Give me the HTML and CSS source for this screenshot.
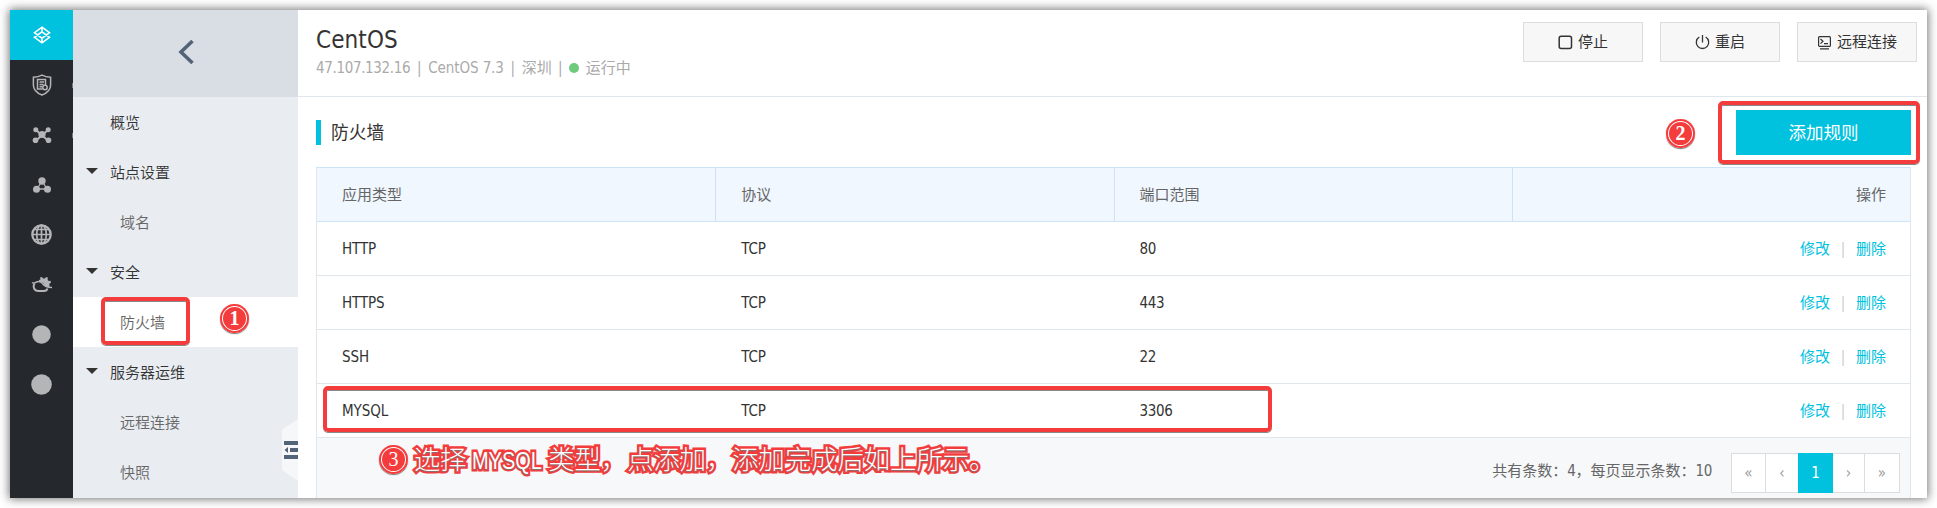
FILE: index.html
```html
<!DOCTYPE html>
<html lang="zh-CN">
<head>
<meta charset="utf-8">
<title>CentOS - 防火墙</title>
<link rel="stylesheet" href="styles.css">
</head>
<body>
<div class="window">
  <nav class="rail">
    <a class="rail-item active"><svg width="18" height="18" viewBox="0 0 18 18" fill="none" stroke="#fff" stroke-width="1.6"><path d="M9 1.2 16.500 6.700 9 12.200 1.500 6.700zM9 5.800 16.500 11.300 9 16.800 1.500 11.300zM9 1.200v4.600M9 12.200v4.600"/></svg></a>
    <a class="rail-item"><svg width="20" height="22" viewBox="0 0 20 22" fill="none" stroke="#b3b5b7" stroke-width="1.500"><path d="M10 1.200c3 1.600 5.500 2 8.600 2v8c0 4.500-3.600 7.800-8.600 9.800C5 19 1.400 15.700 1.400 11.200v-8c3.100 0 5.600-.4 8.600-2z"/><path d="M13.500 11V5.500h-8v9.500h5M7.500 8h4.500M7.500 10.500h4M7.500 12.800h2.500"/><circle cx="13" cy="13.500" r="2.200"/></svg><i class="tick"></i></a>
    <a class="rail-item"><svg width="20" height="18" viewBox="0 0 20 18" fill="#b3b5b7" stroke="#b3b5b7"><path d="M4 4l12 10.500M16 4 4 14.500" stroke-width="2"/><g stroke="none"><circle cx="10" cy="8.500" r="3.600"/><circle cx="3.800" cy="3.800" r="2.500"/><circle cx="16.200" cy="3.800" r="2.500"/><circle cx="3.500" cy="14.300" r="2.800"/><circle cx="16.500" cy="14.300" r="2.800"/></g></svg><i class="tick"></i></a>
    <a class="rail-item"><svg width="18" height="18" viewBox="0 0 18 18" fill="#b3b5b7" stroke="#b3b5b7"><path d="M9 5 4 13h10z" fill="none" stroke-width="1.300"/><g stroke="none"><circle cx="9" cy="5" r="3.700"/><circle cx="3.500" cy="13.300" r="3.500"/><circle cx="14.500" cy="13.300" r="3.500"/></g></svg></a>
    <a class="rail-item"><svg width="21" height="21" viewBox="0 0 21 21" fill="none" stroke="#b3b5b7" stroke-width="1.700"><circle cx="10.500" cy="10.500" r="9.200" stroke-width="2.300"/><ellipse cx="10.500" cy="10.500" rx="4.800" ry="9.300"/><path d="M10.500 1v19M1 10.500h19M3 5.500h15M3 15.500h15"/></svg></a>
    <a class="rail-item"><svg width="22" height="18" viewBox="0 0 22 18"><path d="M8 4 9.500 3.500 9 1.500l2-.5 1 1.500h2L15 1l2 .8-.5 2 1.300 1.300 1.700-.3.500 2-1.700 1 .3 3-3.500.5L12 6.500 8 6z" fill="#b3b5b7"/><path d="M1 6.500c2 1.500 3 0 4.500-.5s4.500-.5 6 1.500 4 4 9.500 4" fill="none" stroke="#b3b5b7" stroke-width="1.500"/><path d="M3.500 7.500c-2 3-.5 7.500 4 7.500h5.500c1.500 0 3-1 3.500-2.500" fill="none" stroke="#b3b5b7" stroke-width="2"/></svg></a>
    <a class="rail-item"><svg width="19" height="19" viewBox="0 0 19 19"><circle cx="9.500" cy="9.500" r="9.300" fill="#b3b5b7"/></svg></a>
    <a class="rail-item"><svg width="21" height="21" viewBox="0 0 21 21"><circle cx="10.500" cy="10.500" r="10.300" fill="#b3b5b7"/></svg></a>
  </nav>

  <aside class="sidebar">
    <div class="back"><svg width="18" height="26" viewBox="0 0 18 26" fill="none" stroke="#546478" stroke-width="3.600"><path d="M15.500 2 4 13l11.500 11"/></svg></div>
    <a class="menu">概览</a>
    <a class="menu group">站点设置</a>
    <a class="menu sub">域名</a>
    <a class="menu group">安全</a>
    <a class="menu sub current">防火墙<span class="mark mark-menu"></span><span class="badge badge-one">1</span></a>
    <a class="menu group">服务器运维</a>
    <a class="menu sub">远程连接</a>
    <a class="menu sub">快照</a>
    <svg class="fold" width="16" height="62" viewBox="0 0 16 62"><path d="M16 0 0 11v40l16 11z" fill="#f6f7f8"/><path d="M2 22h14v4H2zM8 29h8v4H8zM2 36h14v4H2zM6 28v6l-3.500-3z" fill="#546478"/></svg>
  </aside>

  <main class="main">
    <header class="head">
      <div>
        <h1 class="title">CentOS</h1>
        <p class="meta"><span class="lat">47.107.132.16</span><i class="bar">|</i><span class="lat os">CentOS 7.3</span><i class="bar">|</i><span>深圳</span><i class="bar last">|</i><i class="dot"></i><span>运行中</span></p>
      </div>
      <div class="actions">
        <button class="btn"><svg width="15" height="15" viewBox="0 0 15 15" fill="none" stroke="#333" stroke-width="1.500"><rect x="1.200" y="1.200" width="12.300" height="12.300" rx="2"/></svg>停止</button>
        <button class="btn"><svg width="15" height="15" viewBox="0 0 15 15" fill="none" stroke="#333" stroke-width="1.300"><path d="M7.500 0v7.500M4.300 2A6.200 6.200 0 1 0 10.700 2"/></svg>重启</button>
        <button class="btn"><svg width="15" height="15" viewBox="0 0 15 15" fill="none" stroke="#333" stroke-width="1.200"><rect x="1.600" y="1.600" width="11.800" height="9.800" rx="1"/><path d="M3.500 4l2.500 2.300L3.500 8.600M7 8.600h4M3 13.900h9"/></svg>远程连接</button>
      </div>
    </header>

    <section class="content">
      <div class="section-head">
        <h2 class="section-title">防火墙</h2>
        <div class="add-wrap"><span class="badge badge-two">2</span><button class="add">添加规则</button><span class="mark mark-add"></span></div>
      </div>
      <div class="table">
        <div class="row th"><div>应用类型</div><div>协议</div><div>端口范围</div><div class="ops">操作</div></div>
        <div class="row"><div>HTTP</div><div>TCP</div><div>80</div><div class="ops"><a>修改</a><i>|</i><a>删除</a></div></div>
        <div class="row"><div>HTTPS</div><div>TCP</div><div>443</div><div class="ops"><a>修改</a><i>|</i><a>删除</a></div></div>
        <div class="row"><div>SSH</div><div>TCP</div><div>22</div><div class="ops"><a>修改</a><i>|</i><a>删除</a></div></div>
        <div class="row"><div>MYSQL</div><div>TCP</div><div>3306</div><div class="ops"><a>修改</a><i>|</i><a>删除</a></div><span class="mark mark-row"></span></div>
        <div class="foot">
          <div class="note"><span class="badge badge-three">3</span><span class="note-text">选择 <b>MYSQL</b> 类型，点添加，添加完成后如上所示。</span></div>
          <span class="count">共有条数：<span class="lat">4</span>，每页显示条数：<span class="lat">10</span></span>
          <div class="pager"><a>«</a><a class="narrow">‹</a><a class="on">1</a><a class="narrow">›</a><a>»</a></div>
        </div>
      </div>
    </section>
  </main>
</div>
</body>
</html>
```
FILE: styles.css
```css
* { box-sizing: border-box; }
body {
  margin: 0;
  padding: 10px;
  height: 508px;
  overflow: hidden;
  background: #fff;
  color: #333;
  font: 15px/20px "DejaVu Sans Condensed", "DejaVu Sans", "Noto Sans CJK SC", sans-serif;
  font-stretch: condensed;
}
i { font-style: normal; }
svg { display: block; flex: none; }
.window {
  display: flex;
  width: 1917px;
  height: 488px;
  background: #fff;
  box-shadow: 0 0 9px 1px rgba(0, 0, 0, .55);
}
.lat { letter-spacing: -.34px; }
.lat.os { letter-spacing: -.1px; }

/* product rail */
.rail { width: 63px; background: #25292d; }
.rail-item { position: relative; display: flex; height: 50px; align-items: center; justify-content: center; padding-bottom: 1px; }
.rail-item.active { background: #00c1de; }
.tick { position: absolute; right: 0; top: 23px; width: 1px; height: 5px; background: #777; }

/* instance menu */
.sidebar { position: relative; width: 225px; background: #e9edf2; font-family: "Noto Sans CJK SC", sans-serif; font-weight: 350; }
.back { display: flex; height: 87px; padding-bottom: 3px; align-items: center; justify-content: center; background: #d9dde4; }
.menu { position: relative; display: flex; height: 50px; align-items: center; padding: 0 0 1px 37px; }
.group::before { content: ""; position: absolute; left: 13px; top: 21px; border: 6px solid transparent; border-top-color: #333; border-bottom: 0; }
.sub { padding-left: 47px; color: #666; }
.current { background: #fff; }
.fold { position: absolute; right: 0; top: 409px; }

/* main column */
.main { flex: 1; min-width: 0; }
.head { display: flex; height: 87px; justify-content: space-between; padding: 12px 10px 0 18px; border-bottom: 1px solid #dfe6ee; }
.title { margin: 3px 0 0; font-size: 24px; line-height: 30px; font-weight: 400; letter-spacing: .1px; }
.meta { display: flex; align-items: center; margin: 3px 0 0; color: #aaa; }
.bar { width: 18px; text-align: center; }
.bar.last { width: 17px; }
.dot { width: 10px; height: 10px; margin-right: 7px; border-radius: 50%; background: #6ecb7b; }
.actions { display: flex; gap: 17px; }
.btn { display: flex; width: 120px; height: 40px; align-items: center; justify-content: center; gap: 5px; padding: 0; border: 1px solid #ddd; background: #f7f7f7; color: #333; font: inherit; }
.content { padding: 13px 16px 0 18px; }
.section-head { display: flex; height: 57px; justify-content: space-between; }
.section-title { height: 25px; margin: 10px 0 0; padding-left: 10px; border-left: 5px solid #00c1de; font-size: 17.700px; line-height: 27px; font-weight: 400; }
.add-wrap { position: relative; display: flex; gap: 41px; }
.add { width: 175px; height: 45px; padding: 0; border: 0; background: #00c1de; color: #fff; font: inherit; font-size: 17.500px; }

/* rules table */
.table { border: 1px solid #dfe6ee; border-top-color: #cde3f8; border-bottom: 0; }
.row { position: relative; display: grid; grid-template-columns: repeat(4, 1fr); height: 54px; border-bottom: 1px solid #e1e6eb; }
.row > div { display: flex; align-items: center; padding: 0 24px 0 25px; border-left: 1px solid transparent; letter-spacing: -.1px; }
.row > div:first-child { border-left: 0; }
.row > div:nth-child(3) { letter-spacing: -.35px; }
.th { background: #f0f7ff; color: #666; border-color: #cde3f8; }
.row.th > div { letter-spacing: 0; border-left-color: #cde3f8; }
.row > .ops { justify-content: flex-end; letter-spacing: 0; }
.ops a { color: #00c1de; }
.ops i { width: 26px; text-align: center; color: #ccc; }
.foot { display: flex; height: 60px; align-items: flex-start; padding: 7px 10px 0 62px; background: #f6f8fa; color: #666; }
.count { margin: 16px 19px 0 auto; }
.pager { display: flex; margin-top: 8px; border: 1px solid #ddd; background: #fff; height: 40px; color: #999; }
.pager a { display: flex; width: 34px; align-items: center; justify-content: center; border-right: 1px solid #ddd; }
.pager a:last-child { border: 0; }
.pager .narrow { width: 32px; border-right: 0; }
.pager .narrow:nth-child(4) { border-right: 1px solid #ddd; }
.pager .on { width: 35px; margin: -1px 0; border: 0; background: #00c1de; color: #fff; }

/* annotations */
.mark { position: absolute; border: 4px solid #f43c3c; border-radius: 5px; box-shadow: 0 1px 0 #888, inset 0 1px 0 #888; }
.mark-menu { left: 28px; top: 0; width: 89px; height: 48px; }
.mark-add { left: 52px; top: -9px; width: 202px; height: 63px; }
.mark-row { left: 6px; top: 2px; width: 949px; height: 46px; }
.badge { display: flex; flex: none; width: 29px; height: 29px; align-items: center; justify-content: center; border-radius: 50%; background: #f43c3c; box-shadow: 0 1px 1px #777, inset 0 0 0 2px #f43c3c, inset 0 0 0 3px #fff; color: #fff; font: bold 20px/29px "Liberation Serif", serif; }
.badge-one { position: absolute; left: 147px; top: 7px; }
.badge-two { margin-top: 9px; }
.badge-three { font-weight: 400; }
.note { display: flex; height: 30px; gap: 6px; }
.note-text { color: #fff; font: 300 26.300px/29px "Noto Sans CJK SC", sans-serif; margin-top: -2px; white-space: nowrap; -webkit-text-stroke: 5px #f43c3c; paint-order: stroke fill; text-shadow: 0 1px 1px #777; }
.note-text b { display: inline-block; margin-right: -14px; font: 400 24px/29px "Liberation Sans", sans-serif; transform: scaleX(.83); transform-origin: left; }
```
